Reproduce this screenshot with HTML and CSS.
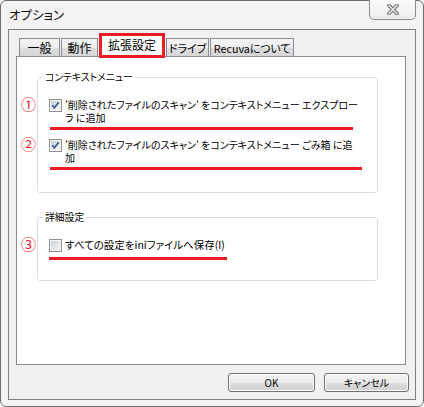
FILE: index.html
```html
<!DOCTYPE html>
<html lang="ja">
<head>
<meta charset="utf-8">
<title>オプション</title>
<link rel="stylesheet" href="styles.css">
</head>
<body>
<div class="window">
  <div class="titlebar">
    <span class="title">オプション</span>
    <div class="close">
      <svg width="12" height="11" viewBox="0 0 12 11">
        <path d="M2 1.5 L10 9.5 M10 1.5 L2 9.5" stroke="#6e6e6e" stroke-width="3.6" stroke-linecap="square" fill="none"/>
        <path d="M2 1.5 L10 9.5 M10 1.5 L2 9.5" stroke="#e2e2e2" stroke-width="1.6" stroke-linecap="square" fill="none"/>
      </svg>
    </div>
  </div>
  <div class="client">
    <div class="tabs">
      <div class="tab t1">一般</div>
      <div class="tab t2">動作</div>
      <div class="tab sel">拡張設定</div>
      <div class="tab t4">ドライブ</div>
      <div class="tab t5">Recuvaについて</div>
    </div>
    <div class="page">
      <div class="group">
        <div class="glabel">コンテキストメニュー</div>
        <div class="opt">
          <span class="num">①</span>
          <span class="cb">
            <svg width="13" height="13" viewBox="0 0 13 13">
              <defs><linearGradient id="g1" x1="0" y1="0" x2="1" y2="1"><stop offset="0" stop-color="#c9ced6"/><stop offset="1" stop-color="#f7f7f7"/></linearGradient></defs>
              <rect x="0.5" y="0.5" width="12" height="12" fill="#f4f4f4" stroke="#8e8f8f"/>
              <rect x="2" y="2" width="9" height="9" fill="url(#g1)"/>
              <path d="M3.3 6.3 L5.4 8.8 L9.6 3.2" stroke="#3d5a9c" stroke-width="1.7" fill="none"/>
            </svg>
          </span>
          <span class="txt">'削除されたファイルのスキャン' をコンテキストメニュー エクスプロー<br>ラ に追加</span>
          <span class="uline u1"></span>
        </div>
        <div class="opt">
          <span class="num">②</span>
          <span class="cb">
            <svg width="13" height="13" viewBox="0 0 13 13">
              <defs><linearGradient id="g2" x1="0" y1="0" x2="1" y2="1"><stop offset="0" stop-color="#c9ced6"/><stop offset="1" stop-color="#f7f7f7"/></linearGradient></defs>
              <rect x="0.5" y="0.5" width="12" height="12" fill="#f4f4f4" stroke="#8e8f8f"/>
              <rect x="2" y="2" width="9" height="9" fill="url(#g2)"/>
              <path d="M3.3 6.3 L5.4 8.8 L9.6 3.2" stroke="#3d5a9c" stroke-width="1.7" fill="none"/>
            </svg>
          </span>
          <span class="txt">'削除されたファイルのスキャン' をコンテキストメニュー ごみ箱 に追<br>加</span>
          <span class="uline u2"></span>
        </div>
      </div>
      <div class="group g2">
        <div class="glabel">詳細設定</div>
        <div class="opt">
          <span class="num">③</span>
          <span class="cb">
            <svg width="13" height="13" viewBox="0 0 13 13">
              <defs><linearGradient id="g3" x1="0" y1="0" x2="1" y2="1"><stop offset="0" stop-color="#c9ced6"/><stop offset="1" stop-color="#f7f7f7"/></linearGradient></defs>
              <rect x="0.5" y="0.5" width="12" height="12" fill="#f4f4f4" stroke="#8e8f8f"/>
              <rect x="2" y="2" width="9" height="9" fill="url(#g3)"/>
            </svg>
          </span>
          <span class="txt t-ini">すべての設定をiniファイルへ保存(I)</span>
          <span class="uline u3"></span>
        </div>
      </div>
    </div>
    <div class="buttons">
      <div class="btn ok">OK</div>
      <div class="btn cancel">キャンセル</div>
    </div>
  </div>
</div>
</body>
</html>
```

FILE: styles.css
```css
html, body {
  margin: 0;
  padding: 0;
  background: #ffffff;
}
body {
  width: 424px;
  height: 407px;
  font-family: "Noto Sans CJK JP", "Noto Sans", sans-serif;
  font-feature-settings: "palt";
  color: #000;
}
.window {
  box-sizing: border-box;
  width: 424px;
  height: 407px;
  border: 1px solid #6f6f6f;
  border-radius: 6px;
  background: #f3f3f3;
  padding: 0 7px 6px 7px;
  display: flex;
  flex-direction: column;
}
.titlebar {
  height: 28px;
  display: flex;
  align-items: flex-start;
  justify-content: space-between;
  flex: none;
}
.title {
  font-size: 12.5px;
  line-height: 16px;
  padding-top: 6px;
  padding-left: 1px;
  color: #111;
}
.close {
  box-sizing: border-box;
  width: 47px;
  height: 20px;
  margin-top: -1px;
  border: 1px solid #8c8c8c;
  border-top: none;
  border-radius: 0 0 5px 5px;
  background: linear-gradient(#fbfbfb, #ececec);
  display: flex;
  align-items: flex-start;
  justify-content: center;
  padding-top: 4px;
}
.client {
  flex: 1;
  border: 1px solid #7f7f7f;
  background: #f0f0f0;
  display: flex;
  flex-direction: column;
}
.tabs {
  display: flex;
  align-items: flex-end;
  gap: 1px;
  margin: 3px 0 0 10px;
  height: 23px;
  font-size: 12px;
  white-space: nowrap;
}
.tab {
  box-sizing: border-box;
  height: 18px;
  border: 1px solid #898c95;
  border-bottom: none;
  background: linear-gradient(#f4f4f4 0%, #ececec 50%, #dedede 51%, #d6d6d6 100%);
  display: flex;
  align-items: center;
  justify-content: center;
  line-height: 14px;
}
.t1 { width: 41px; }
.t2 { width: 37px; }
.t4 { width: 43px; font-size: 11px; }
.t5 { width: 84px; font-size: 10.8px; }
.tab.sel {
  position: relative;
  z-index: 1;
  width: 66px;
  height: 25px;
  margin-bottom: -2px;
  border: 3px solid #ed1c24;
  background: #ffffff;
  font-size: 12px;
  padding-bottom: 2px;
}
.page {
  box-sizing: border-box;
  width: 390px;
  height: 309px;
  margin-left: 7px;
  border: 1px solid #898c95;
  background: #ffffff;
  padding-top: 20px;
  flex: none;
}
.group {
  margin: 0 27px 0 20px;
  border: 1px solid #d5dfe5;
  border-radius: 3px;
  padding-bottom: 28px;
  font-size: 10px;
}
.g2 {
  margin-top: 24px;
}
.glabel {
  width: fit-content;
  margin: -8px 0 0 5px;
  padding: 0 2px;
  background: #ffffff;
  line-height: 14px;
  font-size: 9.8px;
}
.opt {
  position: relative;
  display: flex;
  align-items: flex-start;
  margin: 14px 0 0 11px;
}
.opt + .opt {
  margin-top: 14px;
}
.cb {
  width: 13px;
  height: 13px;
  margin-top: 1px;
  flex: none;
  display: block;
}
.cb svg { display: block; }
.txt {
  margin-left: 3px;
  line-height: 13px;
  white-space: nowrap;
}
.t-ini {
  font-size: 10.5px;
}
.num {
  position: absolute;
  left: -28px;
  top: -2px;
  font-size: 15px;
  line-height: 16px;
  color: #ec2028;
}
.uline {
  position: absolute;
  height: 3px;
  background: #ed1c24;
}
.u1 { left: 1px; top: 29px; width: 303px; }
.u2 { left: 1px; top: 29px; width: 312px; }
.u3 { left: 0; top: 19px; width: 178px; }
.buttons {
  display: flex;
  justify-content: flex-end;
  gap: 9px;
  margin: 8px 6px 0 0;
}
.btn {
  box-sizing: border-box;
  height: 19px;
  border: 1px solid #707070;
  border-radius: 3px;
  background: linear-gradient(#f3f3f3 0%, #ebebeb 50%, #dddddd 51%, #cfcfcf 100%);
  box-shadow: inset 0 0 0 1px #fcfcfc;
  font-size: 10px;
  line-height: 17px;
  text-align: center;
}
.ok { width: 87px; }
.cancel { width: 85px; }
```
